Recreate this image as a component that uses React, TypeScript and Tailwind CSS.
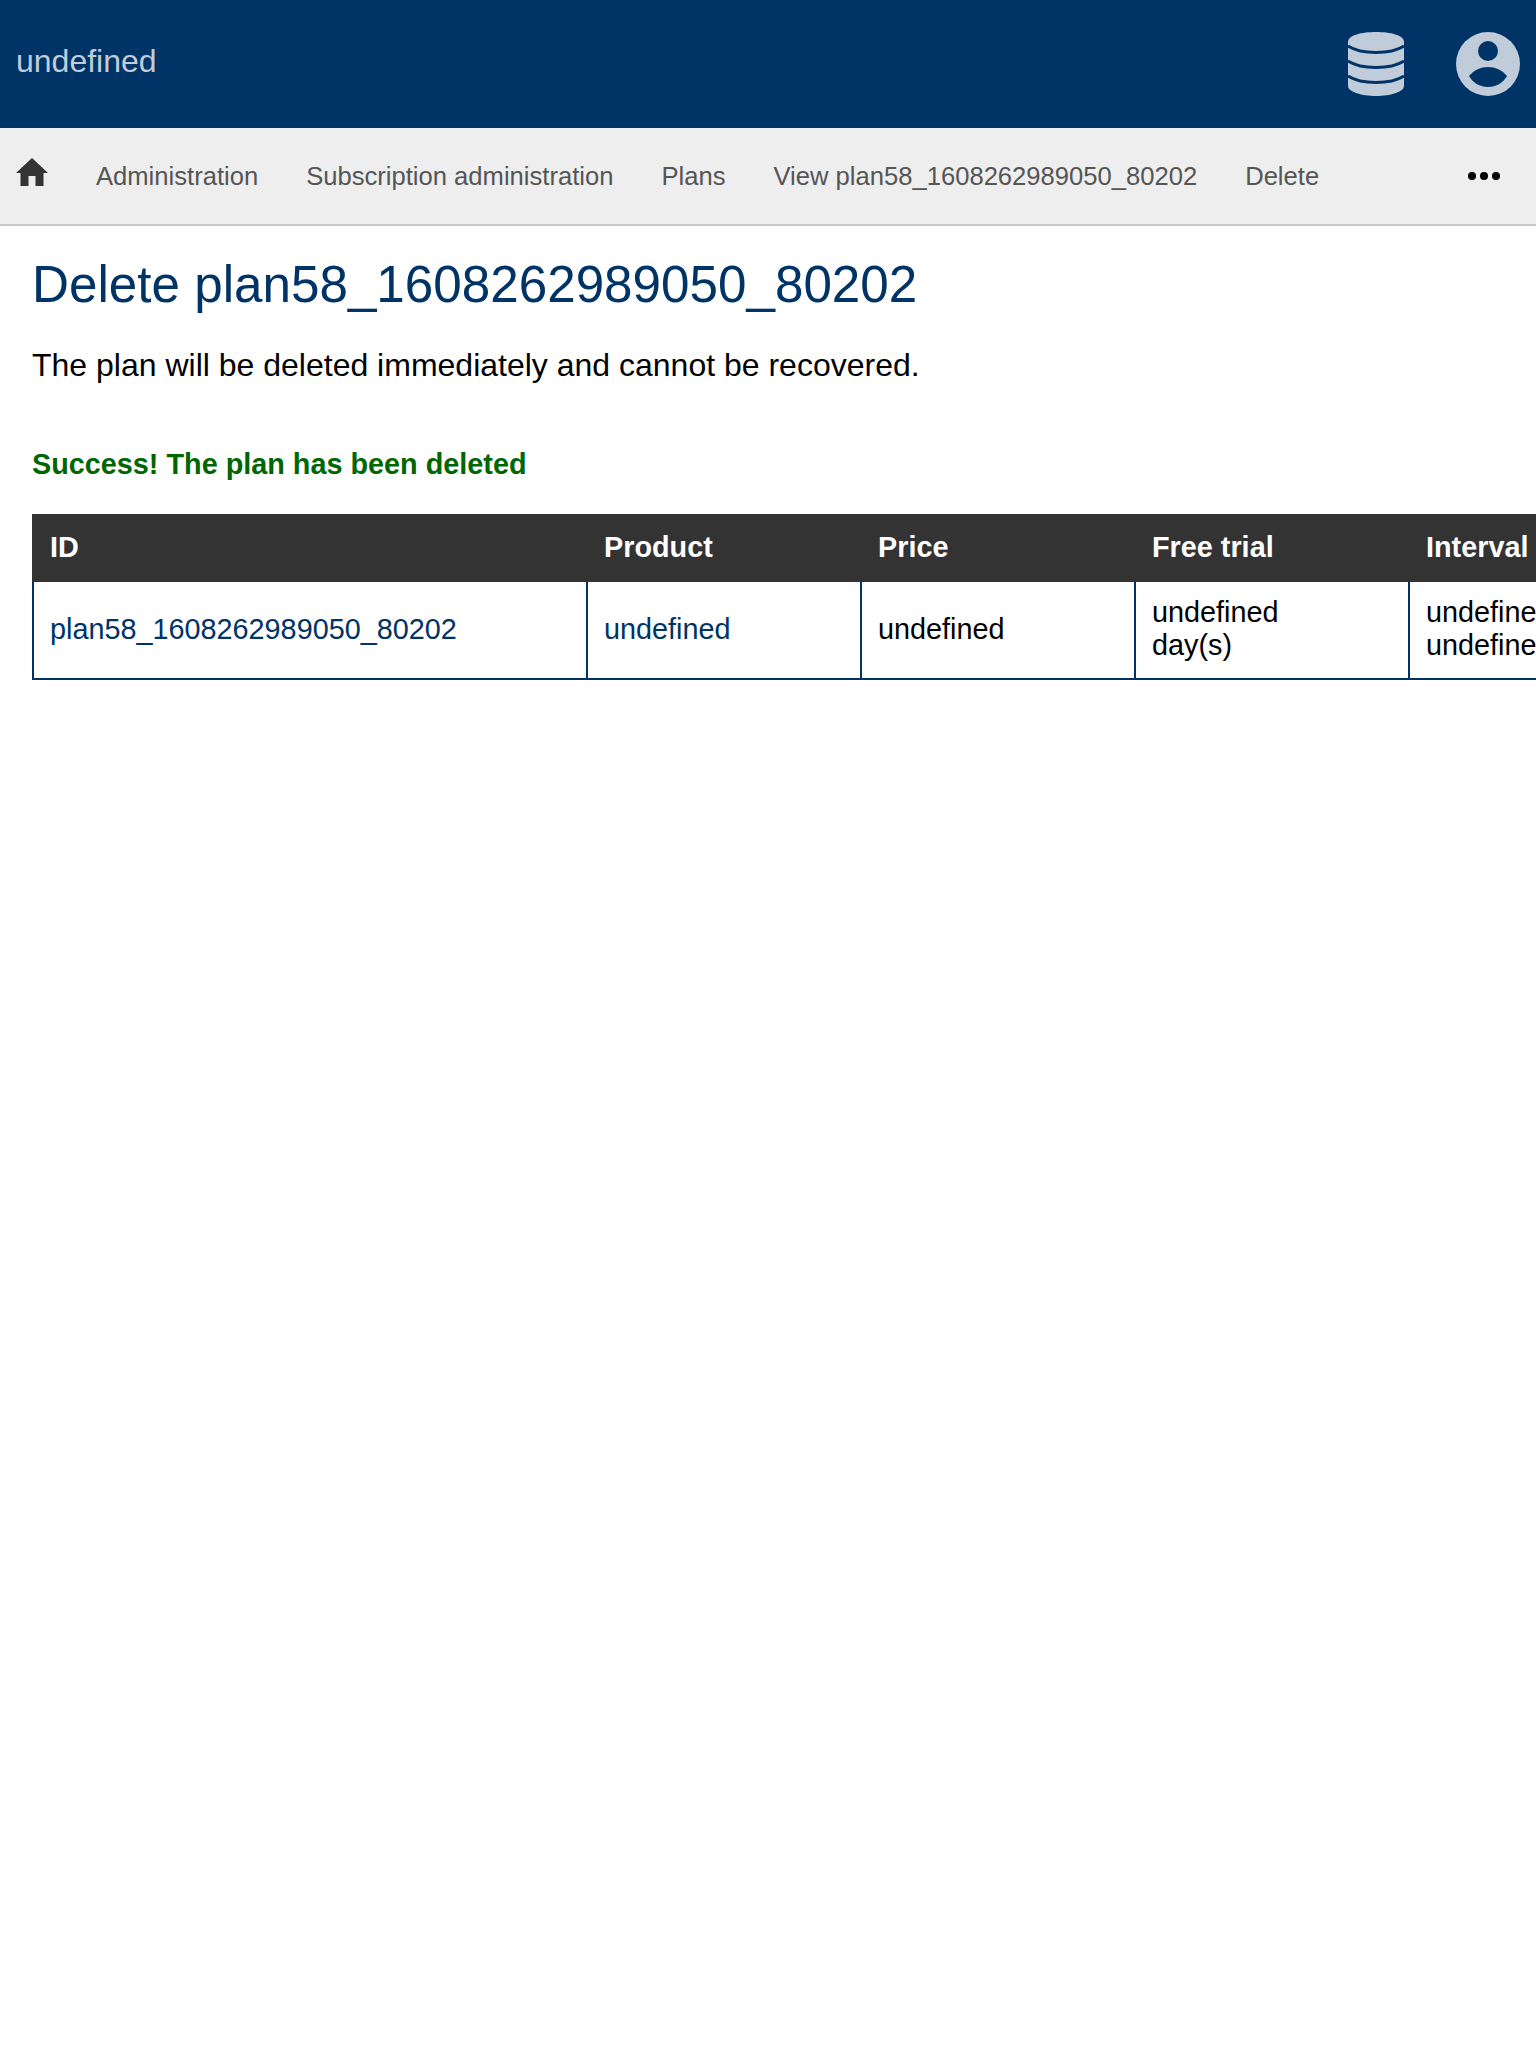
import React from "react";

function Db() {
  return (
    <svg width="56" height="64" viewBox="0 0 56 64">
      <path d="M0 10C0 3 14 0 28 0S56 3 56 10V54C56 60 42 64 28 64S0 60 0 54Z" fill="#c0ccda" />
      <g fill="none" stroke="#003366" strokeWidth="3">
        <path d="M0 14C6 18 17 20.500 28 20.500S50 18 56 14" />
        <path d="M0 29C6 33 17 35.500 28 35.500S50 33 56 29" />
        <path d="M0 44C6 48 17 50.500 28 50.500S50 48 56 44" />
      </g>
    </svg>
  );
}

function User() {
  return (
    <svg width="64" height="64" viewBox="0 0 64 64">
      <circle cx="32" cy="32" r="32" fill="#c0ccda" />
      <circle cx="32" cy="19" r="10" fill="#003366" />
      <path d="M13 44C18 38 25 35 32 35C39 35 46 38 51 44C47 51 40 55 32 55C24 55 17 51 13 44Z" fill="#003366" />
    </svg>
  );
}

function Home() {
  return (
    <svg width="32" height="28" viewBox="0 0 32 28" fill="#333333" className="mb-2">
      <path d="M16 0L32 15H27.500V28H19.500V18H12.500V28H4.500V15H0Z" />
    </svg>
  );
}

export default function App() {
  const crumbs = ["Administration", "Subscription administration", "Plans", "View plan58_1608262989050_80202", "Delete"];
  const cell = "border-b-2 border-l-2 border-[#003366] px-4 pb-[2px]";
  return (
    <div className="h-[2048px] overflow-hidden bg-white font-['Liberation_Sans',Arial,sans-serif] text-black">
      <header className="flex h-[128px] items-center bg-[#003366] px-4">
        <span className="mb-[6px] flex-1 text-[32px] leading-[40px] text-[#c0ccda]">undefined</span>
        <div className="mr-[52px]"><Db /></div>
        <User />
      </header>
      <nav className="flex h-[98px] items-center border-b-2 border-[#c8c8c8] bg-[#eeeeee] pl-4 pr-[36px] text-[25.6px] text-[#555555]">
        <Home />
        <div className="ml-[48px] flex flex-1 gap-[48px]">
          {crumbs.map((c) => <span key={c}>{c}</span>)}
        </div>
        <div className="flex gap-1">
          <i className="h-2 w-2 rounded-full bg-black" />
          <i className="h-2 w-2 rounded-full bg-black" />
          <i className="h-2 w-2 rounded-full bg-black" />
        </div>
      </nav>
      <main className="pl-8">
        <h1 className="mt-[27px] text-[51.2px] leading-[64px] text-[#003366]">Delete plan58_1608262989050_80202</h1>
        <p className="mt-[28px] text-[32px] leading-[40px]">The plan will be deleted immediately and cannot be recovered.</p>
        <p className="mt-[61px] text-[28.8px] font-bold leading-[36px] text-[#006600]">Success! The plan has been deleted</p>
        <div className="mt-[32px] w-[1504px] overflow-hidden">
          <table className="w-[1700px] table-fixed border-separate border-spacing-0 text-[28.8px] leading-[33px]">
            <colgroup>
              <col className="w-[554px]" />
              <col className="w-[274px]" />
              <col className="w-[274px]" />
              <col className="w-[274px]" />
              <col className="w-[324px]" />
            </colgroup>
            <thead>
              <tr className="h-[68px] bg-[#333333] text-left text-white">
                {["ID", "Product", "Price", "Free trial", "Interval"].map((h) => (
                  <th key={h} className="pb-[2px] pl-[18px] pr-4 font-bold">{h}</th>
                ))}
              </tr>
            </thead>
            <tbody>
              <tr className="h-[98px]">
                <td className={cell + " text-[#003366]"}>plan58_1608262989050_80202</td>
                <td className={cell + " text-[#003366]"}>undefined</td>
                <td className={cell}>undefined</td>
                <td className={cell}>undefined<br />day(s)</td>
                <td className={cell}>undefined<br />undefined</td>
              </tr>
            </tbody>
          </table>
        </div>
      </main>
    </div>
  );
}
